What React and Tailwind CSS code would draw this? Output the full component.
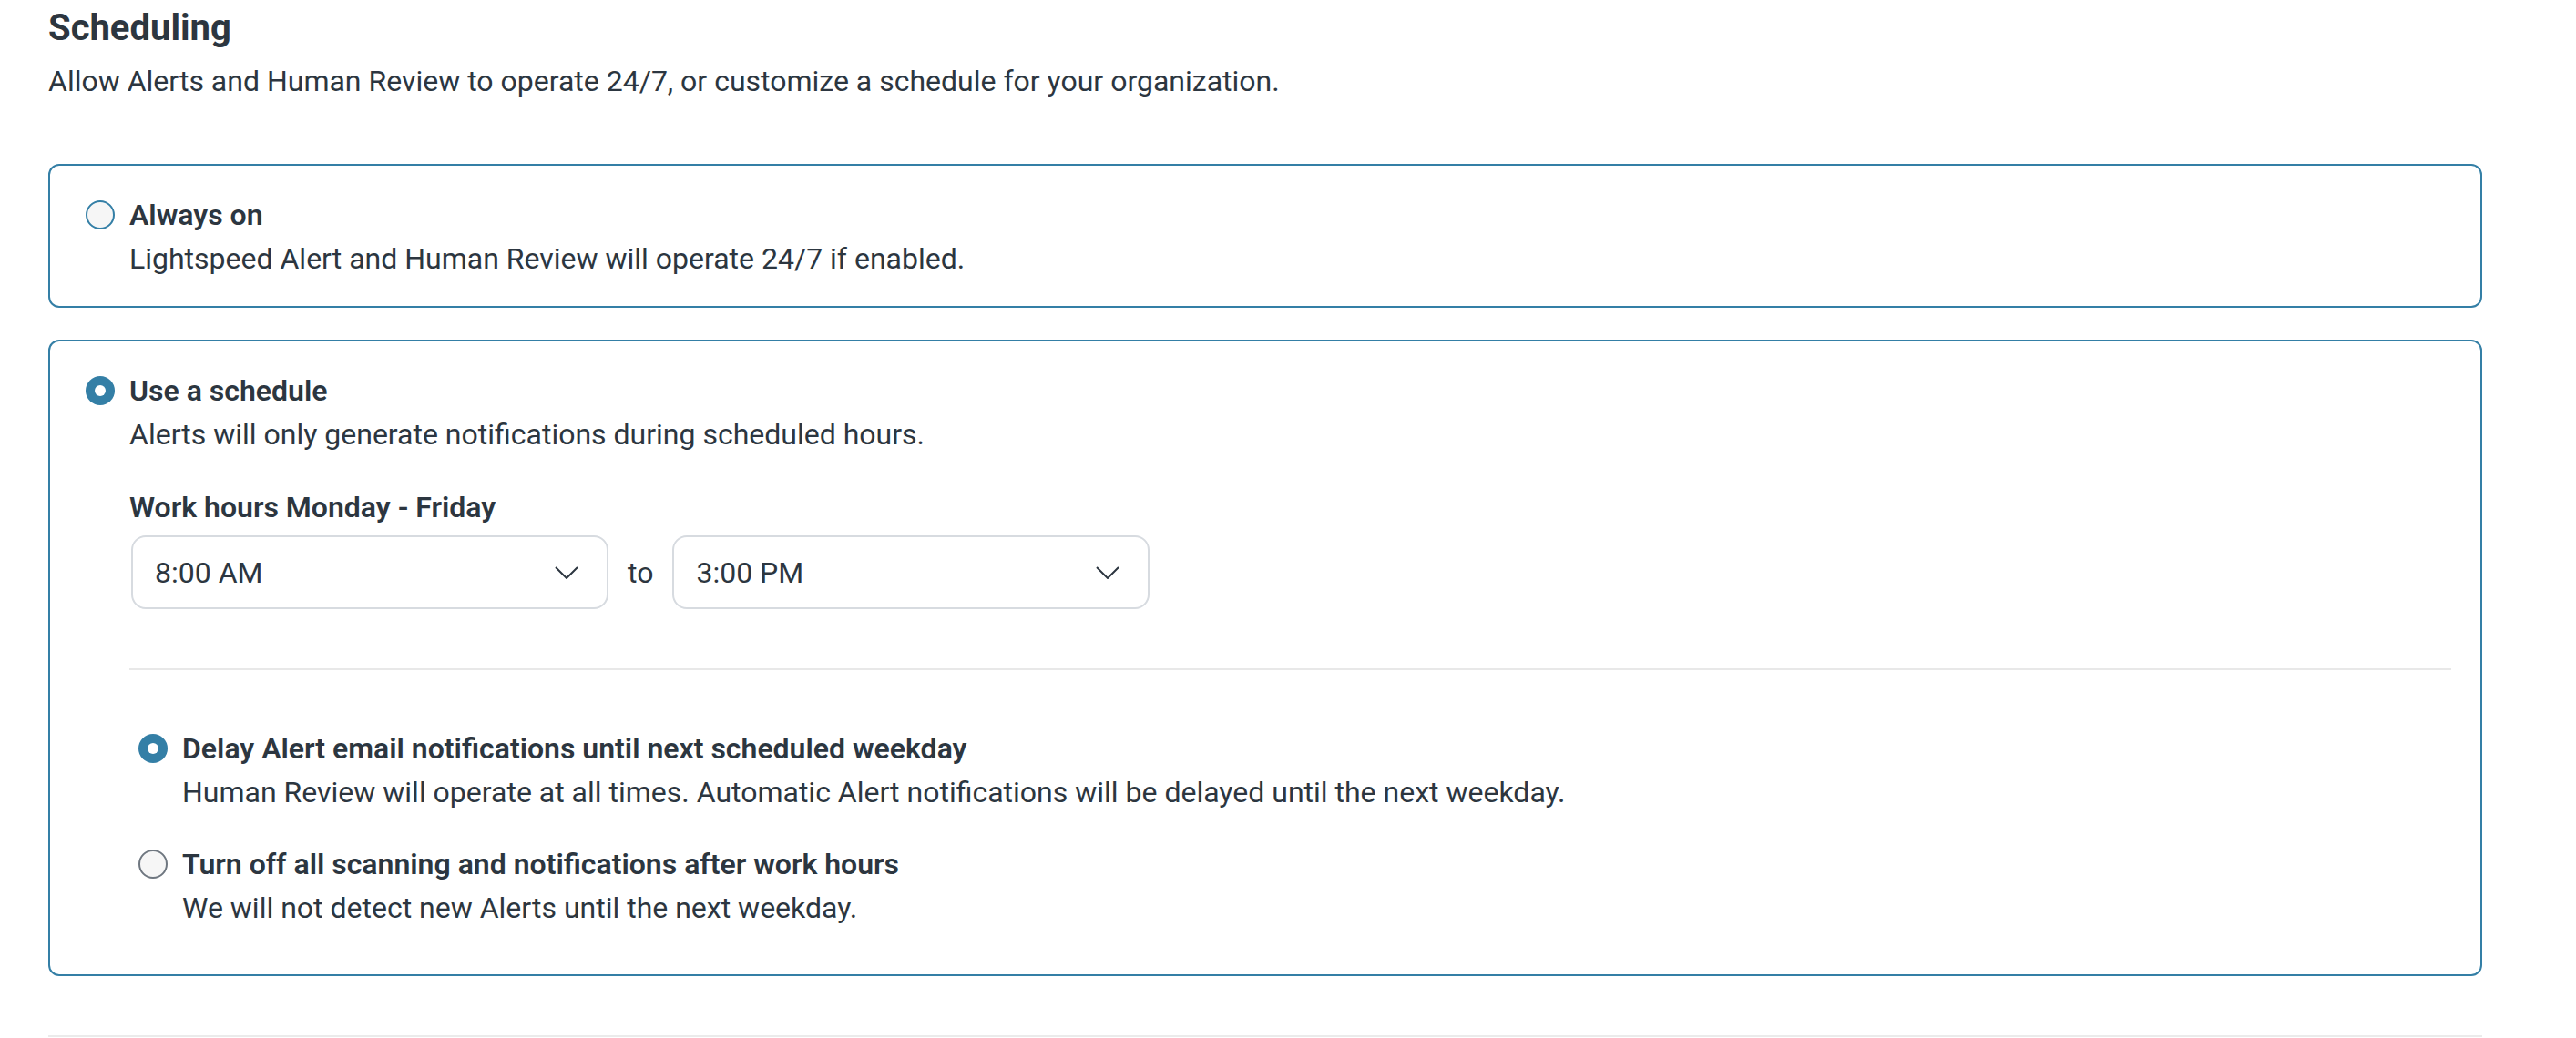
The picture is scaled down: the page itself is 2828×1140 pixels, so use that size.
import { useState } from "react";

const Radio = ({ checked, tone = "blue" }) => {
  if (checked) {
    return (
      <span className="flex h-8 w-8 shrink-0 items-center justify-center rounded-full bg-[#347fa6]">
        <span className="h-3 w-3 rounded-full bg-white" />
      </span>
    );
  }
  return (
    <span
      className={`h-8 w-8 shrink-0 rounded-full border-2 bg-[#f6f6f6] ${
        tone === "gray" ? "border-[#6f7780]" : "border-[#347fa6]"
      }`}
    />
  );
};

const Chevron = () => (
  <svg width="26" height="14" viewBox="0 0 26 14" fill="none" stroke="#2c3640" strokeWidth="2">
    <polyline points="1 1 13 13 25 1" />
  </svg>
);

const TimeSelect = ({ value }) => (
  <div className="flex h-[81px] w-[524px] items-center justify-between rounded-2xl border-2 border-[#d7dbe0] bg-white pl-6 pr-[31px]">
    <span>{value}</span>
    <Chevron />
  </div>
);

const Option = ({ checked, tone, title, desc }) => (
  <div className="flex gap-4">
    <div className="flex h-12 items-center">
      <Radio checked={checked} tone={tone} />
    </div>
    <div className="flex flex-col">
      <span className="font-semibold leading-[48px]">{title}</span>
      <span className="leading-[48px]">{desc}</span>
    </div>
  </div>
);

export default function App() {
  const [mode] = useState("schedule");

  return (
    <div className="min-h-[1140px] bg-white pl-[53px] pr-[103px] pt-[7px] font-[Roboto,sans-serif] text-[32px] text-[#2c3640]">
      {/* header */}
      <h1 className="text-[40px] font-bold leading-[48px]">Scheduling</h1>
      <p className="mt-[10px] leading-[48px]">
        Allow Alerts and Human Review to operate 24/7, or customize a schedule for your organization.
      </p>

      <div className="mt-[67px] flex flex-col gap-[35px]">
        {/* always on */}
        <div className="rounded-xl border-2 border-[#347fa6] pb-[28px] pl-[39px] pr-8 pt-[30px]">
          <Option
            checked={mode === "always"}
            title="Always on"
            desc="Lightspeed Alert and Human Review will operate 24/7 if enabled."
          />
        </div>

        {/* schedule */}
        <div className="rounded-xl border-2 border-[#347fa6] pb-[49px] pl-[39px] pr-8 pt-[30px]">
          <Option
            checked={mode === "schedule"}
            title="Use a schedule"
            desc="Alerts will only generate notifications during scheduled hours."
          />
          <div className="ml-12 mt-8 flex flex-col">
            <span className="font-semibold leading-[48px]">Work hours Monday - Friday</span>
            <div className="mt-[7px] flex items-center gap-[21px] pl-[2px]">
              <TimeSelect value="8:00 AM" />
              <span>to</span>
              <TimeSelect value="3:00 PM" />
            </div>
            <div className="mt-[65px] h-[2px] bg-[#e8e8e8]" />
            <div className="ml-[10px] mt-[62px] flex flex-col gap-[31px]">
              <Option
                checked
                title="Delay Alert email notifications until next scheduled weekday"
                desc="Human Review will operate at all times. Automatic Alert notifications will be delayed until the next weekday."
              />
              <Option
                tone="gray"
                title="Turn off all scanning and notifications after work hours"
                desc="We will not detect new Alerts until the next weekday."
              />
            </div>
          </div>
        </div>
      </div>

      <div className="mt-[65px] h-[2px] bg-[#ebebeb]" />
    </div>
  );
}
